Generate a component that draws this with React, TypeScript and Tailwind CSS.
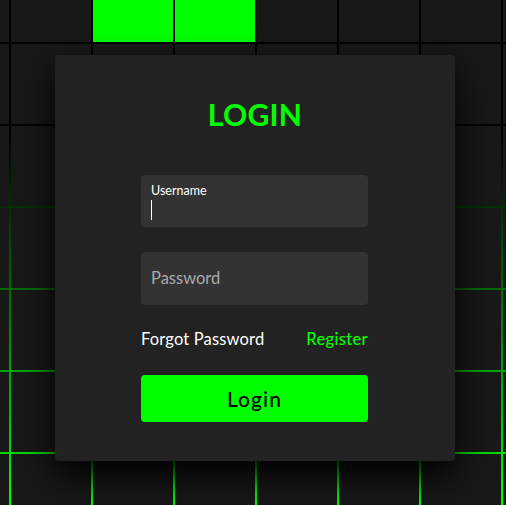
import React from "react";

const COLS = 8;
const ROWS = 7;

// top-row squares that are lit up
const lit = new Set([2, 3]);

const App: React.FC = () => {
  const squares = Array.from({ length: COLS * ROWS }, (_, i) => i);

  return (
    <div className="relative w-full h-[505px] overflow-hidden bg-[linear-gradient(#000_0%,#000_27%,#0f0_100%)] font-['Lato',sans-serif]">
      {/* background grid */}
      <div className="absolute left-[-71px] top-[-38px] grid grid-cols-[repeat(8,80px)] auto-rows-[80px] gap-[2px]">
        {squares.map((i) => (
          <span key={i} className={lit.has(i) ? "bg-[#00ff00]" : "bg-[#181818]"} />
        ))}
      </div>

      <div className="relative z-10 pt-[55px] pl-[55px]">
        <div className="w-[400px] h-[406px] bg-[#222] rounded-[4px] shadow-[0_15px_35px_rgba(0,0,0,1)] flex flex-col items-center">
          <h2 className="mt-[41px] text-[30px] leading-[36px] font-bold text-[#00ff00] tracking-[0.01em]">LOGIN</h2>

          <div className="self-start ml-[86px] w-[227px] flex flex-col">
            {/* username (focused) */}
            <div className="mt-[43px] h-[52px] rounded-[4px] bg-[#333] pl-[10px] pt-[8px]">
              <div className="text-[12.5px] leading-[15px] text-white">Username</div>
              <div className="mt-[2px] w-px h-[20px] bg-white" />
            </div>

            {/* password */}
            <div className="mt-[25px] h-[53px] rounded-[4px] bg-[#333] pl-[10px] flex items-center">
              <span className="text-[16.5px] text-[#aaa]">Password</span>
            </div>

            <div className="mt-[22px] flex justify-between items-center text-[16.5px] leading-[24px]">
              <a href="#" className="text-white tracking-[0.01em]">Forgot Password</a>
              <a href="#" className="text-[#00ff00] font-medium tracking-[0.02em]">Register</a>
            </div>

            <button className="mt-[24px] h-[47px] rounded-[4px] bg-[#00ff00] text-black text-[21px] font-medium tracking-[0.05em]">
              Login
            </button>
          </div>
        </div>
      </div>
    </div>
  );
};

export default App;
